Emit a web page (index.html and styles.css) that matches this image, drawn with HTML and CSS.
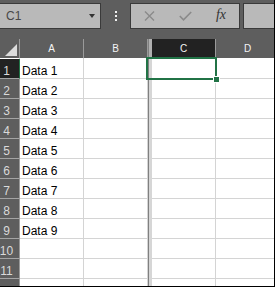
FILE: index.html
```html
<!DOCTYPE html>
<html lang="en">

<head>
    <meta charset="UTF-8">
    <meta name="viewport" content="width=device-width, initial-scale=1.0">
    <title>Sheet</title>
    <link rel="stylesheet" href="styles.css">
</head>

<body>
    <div class="sheet">
        <div class="toolbar">
            <div class="namebox">
                <span class="name">C1</span>
                <span class="arrow"></span>
            </div>
            <div class="dots"><i></i><i></i><i></i></div>
            <div class="fxbox">
                <div class="slot">
                    <svg width="11" height="10" viewBox="0 0 11 10">
                        <path d="M1 0.5 L10 9.5 M10 0.5 L1 9.5" stroke="#8a8a8a" stroke-width="1.4" fill="none"/>
                    </svg>
                </div>
                <div class="slot">
                    <svg width="13" height="10" viewBox="0 0 13 10">
                        <path d="M0.8 5 L4.5 8.8 L12.2 1" stroke="#8a8a8a" stroke-width="1.6" fill="none"/>
                    </svg>
                </div>
                <div class="slot"><span class="fx">fx</span></div>
            </div>
            <div class="formula"></div>
        </div>

        <div class="grid" id="grid">
            <div class="corner"><span class="tri"></span></div>
            <div class="colhdr">A</div>
            <div class="colhdr">B</div>
            <div class="split hdrsplit"></div>
            <div class="colhdr active">C</div>
            <div class="colhdr">D</div>
        </div>

        <div class="selection"><i class="handle"></i></div>
    </div>

    <script>
        const grid = document.getElementById('grid');

        // build 12 rows, column A holds the data
        for (let r = 1; r <= 12; r++) {
            const hdr = document.createElement('div');
            hdr.className = r === 1 ? 'rowhdr active' : 'rowhdr';
            hdr.textContent = r;
            grid.appendChild(hdr);

            const cells = [r <= 9 ? `Data ${r}` : '', '', null, '', ''];
            cells.forEach(text => {
                const div = document.createElement('div');
                if (text === null) {
                    div.className = 'split';
                } else {
                    div.className = 'cell';
                    div.textContent = text;
                }
                grid.appendChild(div);
            });
        }
    </script>
</body>

</html>
```

FILE: styles.css
```css
body {
    margin: 0;
    background: #fff;
    font-family: "Liberation Sans", Arial, sans-serif;
}

.sheet {
    position: relative;
    width: 274px;
    height: 286px;
    border-right: 1px solid #000;
    border-bottom: 1px solid #000;
    overflow: hidden;
    background: #fff;
}

.toolbar {
    display: flex;
    align-items: flex-start;
    height: 39px;
    padding-top: 3px;
    box-sizing: border-box;
    background: #5e5e5e;
}

.namebox {
    flex: none;
    display: flex;
    align-items: center;
    justify-content: space-between;
    width: 102px;
    height: 26px;
    margin-left: -1px;
    padding: 0 5px 0 6px;
    box-sizing: border-box;
    border: 1px solid #3a3a3a;
    background: #b9b9b9;
}

.name {
    font-size: 12px;
    color: #484848;
}

.arrow {
    width: 0;
    height: 0;
    border-style: solid;
    border-width: 4px 3.5px 0 3.5px;
    border-color: #333 transparent transparent transparent;
}

.dots {
    flex: none;
    display: flex;
    flex-direction: column;
    gap: 2px;
    margin: 8px 0 0 14px;
}

.dots i {
    display: block;
    width: 2px;
    height: 2px;
    background: #f2f2f2;
}

.fxbox {
    flex: none;
    display: flex;
    width: 110px;
    height: 26px;
    margin-left: 13px;
    box-sizing: border-box;
    border: 1px solid #3a3a3a;
    background: #b9b9b9;
}

.slot {
    flex: 1;
    display: flex;
    align-items: center;
    justify-content: center;
}

.fx {
    font-family: "Liberation Serif", "Times New Roman", serif;
    font-style: italic;
    font-size: 14px;
    color: #333;
    margin-top: -2px;
}

.formula {
    flex: none;
    width: 60px;
    height: 26px;
    margin-left: 3px;
    box-sizing: border-box;
    border: 1px solid #3a3a3a;
    background: #b9b9b9;
}

.grid {
    display: grid;
    grid-template-columns: 26px 64px 64px 4px 64px 64px;
    grid-template-rows: 20px;
    grid-auto-rows: 20px;
    margin-left: -6px;
}

.grid > div {
    box-sizing: border-box;
}

.corner,
.colhdr {
    background: #5e5e5e;
    border-right: 1px solid #9a9a9a;
    border-bottom: 1px solid #fff;
}

.corner {
    display: flex;
    align-items: flex-end;
    justify-content: flex-end;
    padding: 0 2px 2px 0;
}

.tri {
    width: 0;
    height: 0;
    border-style: solid;
    border-width: 0 0 12px 12px;
    border-color: transparent transparent #dcdcdc transparent;
}

.colhdr {
    display: flex;
    align-items: center;
    justify-content: center;
    font-size: 10px;
    color: #f4f4f4;
}

.colhdr.active {
    background: #222;
}

.rowhdr {
    display: flex;
    align-items: flex-end;
    justify-content: center;
    font-size: 12px;
    line-height: 14px;
    color: #dadada;
    background: #5e5e5e;
    border-right: 1px solid #9a9a9a;
    border-bottom: 1px solid #a4a4a4;
}

.rowhdr.active {
    background: #222;
    border-right-color: #217346;
}

.cell {
    display: flex;
    align-items: flex-end;
    padding-left: 2px;
    font-size: 12px;
    line-height: 14px;
    color: #000;
    border-right: 1px solid #d4d4d4;
    border-bottom: 1px solid #d4d4d4;
}

.split {
    background: #d6d6d6;
    border-left: 1px solid #808080;
}

.hdrsplit {
    background: #b0b0b0;
}

.selection {
    position: absolute;
    left: 146px;
    top: 57px;
    width: 71px;
    height: 23px;
    box-sizing: border-box;
    border: 2px solid #217346;
}

.handle {
    position: absolute;
    right: -5px;
    bottom: -5px;
    width: 5px;
    height: 5px;
    background: #217346;
    border: 1px solid #fff;
}
```
